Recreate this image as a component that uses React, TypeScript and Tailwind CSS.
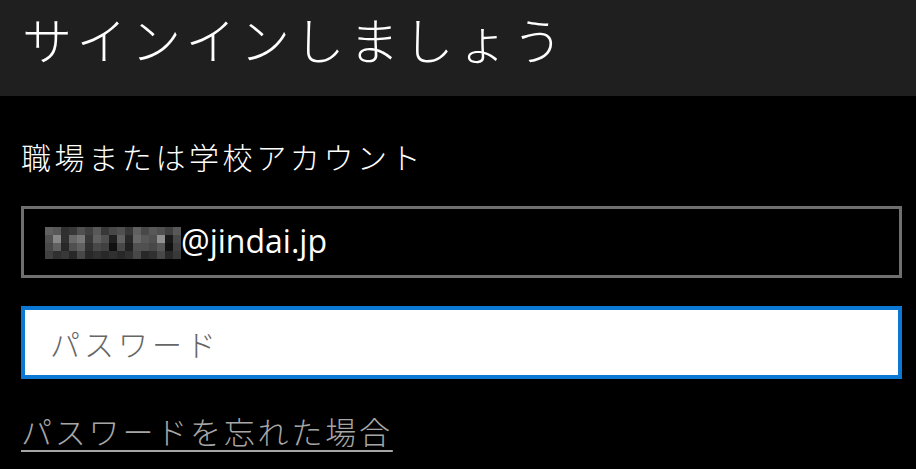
import React from "react";

const mosaic: number[][] = [
  [0x60, 0x58, 0x30, 0x38, 0x50, 0x40, 0x58, 0x38, 0x48, 0x50, 0x38, 0x60, 0x48, 0x58, 0x50, 0x40, 0x58],
  [0x50, 0x88, 0x30, 0x68, 0x78, 0x38, 0x60, 0x50, 0x20, 0x60, 0x28, 0x68, 0x58, 0x50, 0x90, 0x18, 0x48],
  [0x48, 0x60, 0x28, 0x50, 0x60, 0x30, 0x48, 0x40, 0x10, 0x48, 0x20, 0x50, 0x50, 0x48, 0x58, 0x10, 0x40],
  [0x40, 0x30, 0x38, 0x28, 0x48, 0x28, 0x30, 0x28, 0x30, 0x28, 0x30, 0x48, 0x28, 0x30, 0x48, 0x28, 0x38],
];

export default function App() {
  const jp = { fontFamily: '"Noto Sans CJK JP", "Noto Sans", sans-serif' };
  return (
    <div className="w-[916px] h-[469px] bg-black overflow-hidden" style={jp}>
      <div className="h-[96px] bg-[#1f1f1f] pl-[22px] flex items-start pt-[2px]">
        <h1 className="text-[50px] font-light text-white tracking-[4.5px] leading-[72px]">サインインしましょう</h1>
      </div>
      <div className="pl-[21px] pr-[14px]">
        <div className="mt-[36px] text-[30px] font-light text-white tracking-[3.6px] leading-[48px]">職場または学校アカウント</div>
        <div className="mt-[26px] h-[72px] border-[3px] border-[#6f6f6f] bg-black flex items-center pl-[21px]">
          <div className="flex flex-col mt-[2px]">
            {mosaic.map((row, i) => (
              <div key={i} className="flex">
                {row.map((v, j) => (
                  <div key={j} className="w-[8px] h-[8px]" style={{ backgroundColor: `rgb(${v},${v},${v})` }} />
                ))}
              </div>
            ))}
          </div>
          <span className="text-[32px] text-white leading-none pb-[2px]" style={{ fontFamily: '"Open Sans", "Noto Sans", sans-serif' }}>@jindai.jp</span>
        </div>
        <div className="mt-[28px] h-[73px] border-[4px] border-[#0a78d4] bg-white flex items-center pl-[25px]">
          <span className="text-[30px] font-light text-[#666] tracking-[4px] leading-none">パスワード</span>
        </div>
        <div className="mt-[32px]">
          <span className="text-[31px] font-light text-[#a6a6a6] tracking-[2.8px] leading-[40px] underline underline-offset-[6px] decoration-[2px]">パスワードを忘れた場合</span>
        </div>
      </div>
    </div>
  );
}
